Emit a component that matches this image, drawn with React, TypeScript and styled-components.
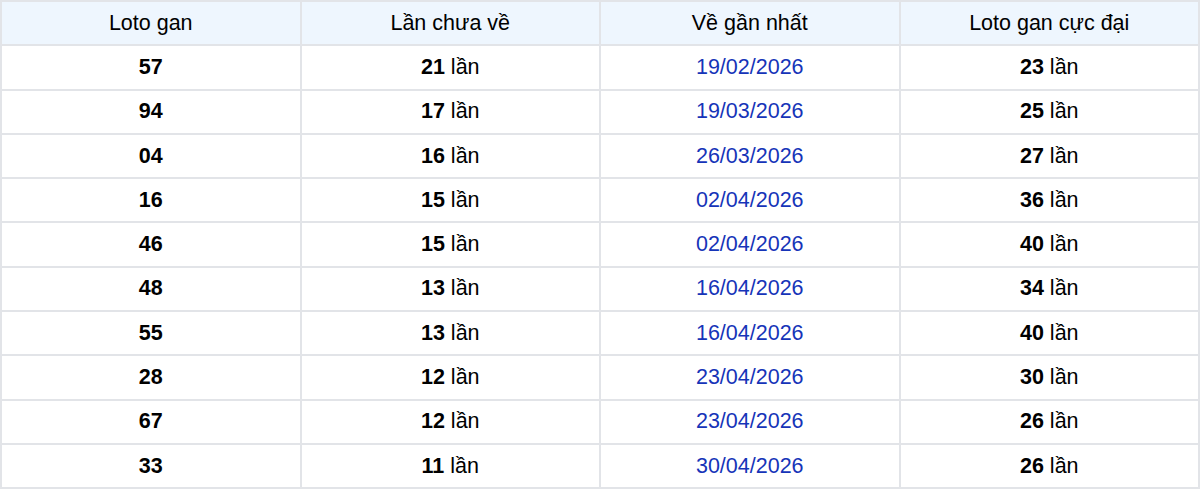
import { createGlobalStyle, styled } from "styled-components";

const GlobalStyle = createGlobalStyle`
  body {
    margin: 0;
    background: #fff;
    font-family: "Liberation Sans", Arial, sans-serif;
  }
`;

const Table = styled.table`
  width: 1200px;
  border-collapse: collapse;
  table-layout: fixed;
  font-size: 21.5px;
  color: #000;
`;

const HeadCell = styled.th`
  height: 42.3px;
  padding: 0;
  border: 2px solid #e2e4e8;
  background: #eef6fe;
  font-weight: 400;
  text-align: center;
`;

const Cell = styled.td<{ $date?: boolean }>`
  height: 42.3px;
  padding: 0;
  border: 2px solid #e2e4e8;
  text-align: center;
  color: ${(p) => (p.$date ? "#1634b8" : "#000")};
`;

const Num = styled.b`
  font-weight: 700;
`;

const rows: [string, number, string, number][] = [
  ["57", 21, "19/02/2026", 23],
  ["94", 17, "19/03/2026", 25],
  ["04", 16, "26/03/2026", 27],
  ["16", 15, "02/04/2026", 36],
  ["46", 15, "02/04/2026", 40],
  ["48", 13, "16/04/2026", 34],
  ["55", 13, "16/04/2026", 40],
  ["28", 12, "23/04/2026", 30],
  ["67", 12, "23/04/2026", 26],
  ["33", 11, "30/04/2026", 26],
];

export default function App() {
  return (
    <>
      <GlobalStyle />
      <Table>
        <thead>
          <tr>
            <HeadCell>Loto gan</HeadCell>
            <HeadCell>Lần chưa về</HeadCell>
            <HeadCell>Về gần nhất</HeadCell>
            <HeadCell>Loto gan cực đại</HeadCell>
          </tr>
        </thead>
        <tbody>
          {rows.map(([num, times, date, max]) => (
            <tr key={num}>
              <Cell>
                <Num>{num}</Num>
              </Cell>
              <Cell>
                <Num>{times}</Num> lần
              </Cell>
              <Cell $date>{date}</Cell>
              <Cell>
                <Num>{max}</Num> lần
              </Cell>
            </tr>
          ))}
        </tbody>
      </Table>
    </>
  );
}
